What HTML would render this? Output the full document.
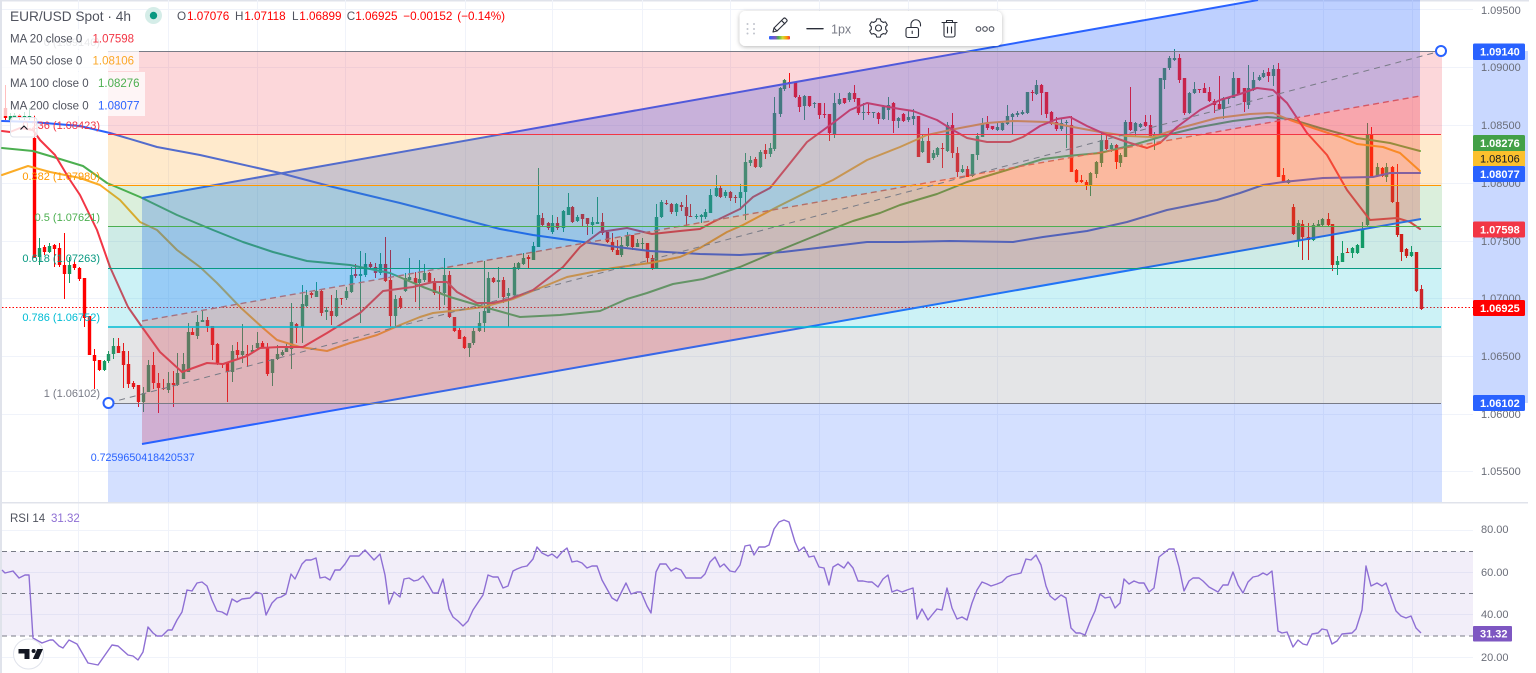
<!DOCTYPE html>
<html><head><meta charset="utf-8"><title>EUR/USD Spot</title>
<style>
html,body{margin:0;padding:0;background:#fff;width:1536px;height:673px;overflow:hidden}
svg{display:block;font-family:"Liberation Sans",sans-serif;filter:blur(.3px)}
text{white-space:pre}
</style></head><body>
<svg width="1536" height="673" viewBox="0 0 1536 673" xmlns="http://www.w3.org/2000/svg">
<defs>
<linearGradient id="rb" x1="0" x2="1" y1="0" y2="0"><stop offset="0" stop-color="#2962ff"/><stop offset=".3" stop-color="#7e57c2"/><stop offset=".45" stop-color="#4caf50"/><stop offset=".65" stop-color="#cddc39"/><stop offset=".85" stop-color="#ff9800"/><stop offset="1" stop-color="#f23645"/></linearGradient>
<filter id="sh" x="-5%" y="-20%" width="110%" height="150%"><feDropShadow dx="0" dy="1" stdDeviation="2.2" flood-color="#000" flood-opacity=".28"/></filter>
</defs>
<rect width="1536" height="673" fill="#fff"/>
<!-- frame -->
<rect x="0" y="0" width="2" height="673" fill="#e0e3eb"/>
<rect x="0" y="0" width="1529" height="1.5" fill="#e0e3eb"/>
<!-- grid -->
<g stroke="#f0f3fa" stroke-width="1">
<path d="M78.5 0V673M168.5 0V673M257.5 0V673M345.5 0V673M465.5 0V673M552.5 0V673M642.5 0V673M730.5 0V673M819.5 0V673M908.5 0V673M997.5 0V673M1145.5 0V673M1234.5 0V673M1323.5 0V673M1412.5 0V673"/>
<path d="M2 9.5H1473M2 67.5H1473M2 125.5H1473M2 183.5H1473M2 241.5H1473M2 298.5H1473M2 356.5H1473M2 414.5H1473M2 471.5H1473"/>
<path d="M2 530.5H1473M2 572.5H1473M2 614.5H1473M2 657.5H1473"/>
</g>
<!-- candles -->
<g transform="translate(.5 0)" fill="none">
<path stroke="#ff0000" stroke-width="1" d="M5 85V120M19 114V120M34 115V258M44 245V255M54 244V267M59 243V267M64 233V299M74 260V270M79 267V281M84 278V327M89 316V355M94 349V389M99 360V371M118 338V353M123 343V388M128 351V388M133 381V389M138 385V407M153 352V389M158 373V413M163 379V390M173 371V407M192 328V335M207 317V332M212 326V360M217 343V365M222 363V368M227 363V402M237 342V360M247 345V367M262 341V347M267 343V376M296 323V343M311 292V298M321 290V316M331 295V325M341 298V305M355 264V278M370 262V268M375 263V278M385 237V282M390 250V327M400 296V309M415 272V302M429 272V283M434 278V295M439 286V310M449 271V318M454 317V332M459 328V339M464 336V349M493 277V283M503 277V303M528 255V269M542 213V227M548 222V230M557 217V230M572 206V223M582 214V227M587 218V235M602 213V235M607 232V243M612 233V252M617 240V255M632 235V250M647 243V263M652 255V270M666 200V205M671 203V214M681 202V211M686 195V227M690 204V217M720 185V198M730 191V201M735 195V203M755 157V168M765 144V159M789 73V88M795 82V98M799 95V112M809 96V107M819 103V119M824 103V118M829 114V141M844 98V104M854 85V102M858 98V115M868 103V115M878 112V124M893 102V133M903 113V122M918 116V157M928 128V163M942 143V168M952 113V158M957 147V177M967 166V177M987 116V130M992 126V130M1032 90V101M1041 84V115M1046 92V118M1051 111V125M1056 117V131M1071 116V172M1076 169V183M1081 175V183M1086 180V190M1106 133V150M1116 144V169M1130 87V131M1145 115V127M1150 115V138M1179 54V83M1184 78V115M1199 89V93M1204 83V93M1209 87V102M1214 99V113M1219 76V110M1238 78V95M1244 88V112M1268 68V82M1278 63V177M1283 168V183M1293 204V235M1302 220V260M1308 223V260M1328 213V227M1332 224V271M1347 248V253M1371 127V178M1382 167V177M1392 166V203M1397 164V237M1401 234V261M1406 248V258M1416 252V292M1421 285V310"/>
<path stroke="#ff0000" stroke-width="3.4" d="M5 108V118M19 115V118M34 138V258M44 247V252M54 245V249M59 248V265M64 265V274M74 264V268M79 268V279M84 278V318M89 316V355M94 355V361M99 360V370M118 346V353M123 351V365M128 364V384M133 383V387M138 385V402M153 365V383M158 383V388M163 388V389M173 383V385M192 332V335M207 320V326M212 326V345M217 344V363M222 363V365M227 363V372M237 350V355M247 354V355M262 343V347M267 347V374M296 324V328M311 293V295M321 291V313M331 311V316M341 298V299M355 274V276M370 264V267M375 267V273M385 264V281M390 280V316M400 298V307M415 278V283M429 273V282M434 282V293M439 292V293M449 275V317M454 317V331M459 330V339M464 337V348M493 278V282M503 280V297M528 257V259M542 218V225M548 223V228M557 223V228M572 207V222M582 214V219M587 218V224M602 222V233M607 232V242M612 242V250M617 250V255M632 235V247M647 243V258M652 258V268M666 203V204M671 204V212M681 205V207M686 207V216M690 216V217M720 188V197M730 192V198M735 197V198M755 159V167M765 150V154M789 82V83M795 82V97M799 97V107M809 96V106M819 103V115M824 114V115M829 114V133M844 98V103M854 93V99M858 98V113M868 112V113M878 113V119M893 103V121M903 114V121M918 116V157M928 141V163M942 148V149M952 125V153M957 153V172M967 169V177M987 124V128M992 126V129M1032 92V93M1041 85V93M1046 92V114M1051 112V124M1056 122V129M1071 125V172M1076 170V182M1081 180V182M1086 182V185M1106 140V149M1116 145V162M1130 122V130M1145 122V126M1150 125V137M1179 58V80M1184 78V113M1199 89V90M1204 88V93M1209 92V101M1214 101V105M1219 104V109M1238 78V94M1244 88V102M1268 72V76M1278 69V177M1283 175V182M1293 207V234M1302 224V237M1308 237V240M1328 219V225M1332 224V265M1347 252V253M1371 135V177M1382 168V176M1392 167V202M1397 202V235M1401 234V252M1406 249V256M1416 252V291M1421 289V309"/>
<path stroke="#159a60" stroke-width="1" d="M10 113V130M14 113V118M24 112V120M29 108V120M39 238V265M49 243V253M69 257V283M104 360V371M108 351V363M113 338V359M143 387V412M148 360V392M168 372V393M177 353V386M183 353V379M188 323V372M197 315V339M202 310V322M232 345V382M242 324V363M252 345V353M257 332V350M272 359V386M277 345V360M282 350V356M286 343V352M291 303V369M302 285V343M306 290V307M316 282V297M326 307V320M336 290V317M346 287V300M351 267V293M360 251V323M365 253V277M380 253V275M395 295V327M405 273V292M409 258V282M419 260V310M424 264V282M444 258V305M469 343V357M473 328V345M479 312V332M484 261V332M488 272V313M498 267V298M508 288V327M514 263V297M518 262V270M523 253V265M533 242V260M538 168V247M552 215V234M563 210V232M568 193V215M577 215V222M592 217V234M597 197V224M621 237V257M627 232V247M637 239V247M642 238V250M656 204V268M661 200V218M676 203V216M696 214V219M701 214V223M705 209V219M710 189V213M716 175V197M725 190V198M740 184V210M745 153V220M750 156V166M760 150V168M770 143V157M774 97V151M780 87V117M784 79V91M804 95V120M814 102V108M834 93V138M839 93V105M849 92V102M863 103V120M873 112V118M883 105V120M888 97V120M898 117V128M908 110V122M913 109V125M922 135V153M933 150V160M937 147V157M947 122V152M962 165V173M972 154V177M977 133V160M982 118V137M997 123V131M1002 122V131M1007 105V125M1012 113V135M1017 111V117M1022 110V115M1027 92V114M1036 80V95M1061 118V131M1066 120V148M1090 172V196M1096 161V178M1101 132V167M1111 143V152M1120 153V167M1125 120V157M1135 122V137M1140 123V128M1154 132V150M1160 78V135M1164 68V89M1169 56V70M1174 49V61M1189 92V114M1194 82V94M1223 97V119M1228 97V104M1233 72V98M1248 65V109M1253 72V91M1259 75V81M1263 70V78M1273 65V86M1288 179V184M1298 220V247M1313 223V241M1318 220V227M1322 218V226M1337 256V275M1342 241V262M1352 247V258M1357 244V254M1362 222V248M1367 123V227M1377 163V177M1386 163V182M1411 246V257"/>
<path stroke="#159a60" stroke-width="3.4" d="M10 116V120M14 115V118M24 116V118M29 116V118M39 248V257M49 246V252M69 265V274M104 361V370M108 354V361M113 346V354M143 393V402M148 365V392M168 383V390M177 373V385M183 364V379M188 332V372M197 322V336M202 320V322M232 351V372M242 351V355M252 350V352M257 343V348M272 359V373M277 354V359M282 352V355M286 348V352M291 322V349M302 304V327M306 295V306M316 291V297M326 310V312M336 298V316M346 291V298M351 275V292M360 274V276M365 264V275M380 264V273M395 299V316M405 278V291M409 277V280M419 279V283M424 273V280M444 275V293M469 343V348M473 331V343M479 323V331M484 311V323M488 278V313M498 280V282M508 293V296M514 267V295M518 263V268M523 258V264M533 246V260M538 215V247M552 223V232M563 211V228M568 207V215M577 217V221M592 222V225M597 222V224M621 245V255M627 235V246M637 243V247M642 243V244M656 217V268M661 202V217M676 204V212M696 216V217M701 215V217M705 212V217M710 195V213M716 188V196M725 192V196M740 192V198M745 162V192M750 160V163M760 152V167M770 148V154M774 113V149M780 88V114M784 80V89M804 96V106M814 103V104M834 103V134M839 99V104M849 93V100M863 112V113M873 112V113M883 107V119M888 105V110M898 118V121M908 117V120M913 116V119M922 141V152M933 153V158M937 148V155M947 125V151M962 169V172M972 154V176M977 136V155M982 123V137M997 127V130M1002 123V130M1007 116V124M1012 114V117M1017 113V115M1022 112V114M1027 92V113M1036 85V94M1061 123V129M1066 122V123M1090 173V185M1096 162V174M1101 140V163M1111 145V149M1120 155V163M1125 122V157M1135 123V131M1140 124V127M1154 134V138M1160 78V135M1164 68V80M1169 58V68M1174 58V60M1189 93V113M1194 89V93M1223 98V109M1228 97V99M1233 78V98M1248 88V105M1253 80V90M1259 77V80M1263 73V77M1273 69V76M1288 180V183M1298 223V241M1313 225V240M1318 224V226M1322 219V225M1337 261V265M1342 253V262M1352 248V253M1357 245V253M1362 230V248M1367 135V225M1377 167V176M1386 167V177M1411 252V256"/>
</g>
<!-- moving averages -->
<g fill="none" stroke-width="2" stroke-linejoin="round" stroke-linecap="round">
<polyline stroke="#2962ff" points="2,121 33,122 80,126 110,133 157,147 200,155 280,173 333,187 400,203 500,229 533,235 583,242 617,247 650,251 700,254 740,255 783,252 817,248 867,242 900,242 950,241 1013,242 1043,237 1087,231 1127,222 1167,210 1217,200 1240,193 1263,185 1283,182 1323,178 1373,177 1390,173 1420,173"/>
<polyline stroke="#4caf50" points="2,148 33,151 60,159 83,166 107,183 140,197 177,215 213,230 243,242 273,252 307,261 350,265 390,273 423,287 450,297 477,305 520,317 560,315 600,311 627,299 647,293 673,284 703,279 740,267 773,253 800,242 827,231 853,221 880,213 900,205 937,194 967,182 1007,170 1043,159 1067,156 1100,153 1133,145 1167,135 1200,127 1233,121 1267,117 1290,119 1320,128 1357,138 1390,143 1420,151"/>
<polyline stroke="#fbac27" points="2,175 28,166 50,172 80,178 100,185 120,200 140,222 157,230 177,250 200,267 217,283 240,307 263,328 277,340 300,347 327,351 350,343 377,335 400,325 420,317 433,313 460,310 483,307 513,299 567,277 613,268 650,263 680,257 700,248 727,232 743,225 777,207 807,192 833,180 867,160 900,147 927,135 960,128 987,123 1013,121 1047,122 1073,127 1100,132 1127,136 1153,137 1180,128 1217,118 1250,114 1273,113 1290,120 1313,128 1340,137 1357,144 1383,147 1400,153 1420,171"/>
<polyline stroke="#f23645" points="2,131 10,132 20,128 33,130 40,140 55,155 70,180 80,195 97,230 110,267 128,307 142,327 160,352 182,372 207,363 223,364 247,356 260,348 280,347 303,347 327,333 340,325 360,313 383,291 413,287 433,282 447,282 457,292 477,303 493,303 510,299 533,290 563,267 580,247 600,232 627,228 652,234 680,231 700,229 713,222 740,209 753,197 770,188 787,167 807,142 833,123 850,110 867,103 883,106 900,109 913,111 937,120 953,130 967,138 987,142 1010,142 1023,137 1040,126 1057,119 1070,117 1087,126 1107,135 1127,142 1147,148 1160,143 1177,127 1200,110 1220,100 1240,94 1257,88 1273,90 1287,103 1307,133 1327,155 1347,190 1370,220 1397,218 1410,222 1420,229"/>
</g>
<!-- last price line -->
<path d="M2 307.5H1473" stroke="#ff0000" stroke-width="1" stroke-dasharray="1.5 2" fill="none"/>
<!-- channel -->
<path d="M142 198L1258 0H1420V96L142 321Z" fill="#2962ff" fill-opacity=".3"/>
<path d="M142 321L1420 96V219L142 444Z" fill="#f23645" fill-opacity=".3"/>
<path d="M142 198L1258 0" stroke="#2962ff" stroke-width="2" fill="none"/>
<path d="M142 444L1421 219" stroke="#2962ff" stroke-width="2" fill="none"/>
<path d="M142 321L1420 96" stroke="#d0606c" stroke-width="1.4" stroke-dasharray="6 4" fill="none"/>
<!-- fib -->
<rect x="108" y="51.5" width="1334" height="82.5" fill="#f23645" fill-opacity=".2"/>
<rect x="108" y="134" width="1334" height="51" fill="#ff9800" fill-opacity=".2"/>
<rect x="108" y="185" width="1334" height="41" fill="#4caf50" fill-opacity=".2"/>
<rect x="108" y="226" width="1334" height="42" fill="#089981" fill-opacity=".2"/>
<rect x="108" y="268" width="1334" height="59" fill="#00bcd4" fill-opacity=".2"/>
<rect x="108" y="327" width="1334" height="76" fill="#787b86" fill-opacity=".2"/>
<rect x="108" y="403" width="1334" height="99" fill="#2962ff" fill-opacity=".2"/>
<g stroke-width="1" fill="none">
<path d="M108 51.5H1441" stroke="#787b86"/>
<path d="M108 134.5H1441" stroke="#f23645"/>
<path d="M108 185.5H1441" stroke="#ff9800"/>
<path d="M108 226.5H1441" stroke="#4caf50"/>
<path d="M108 268.5H1441" stroke="#089981"/>
<path d="M108 327H1441" stroke="#00bcd4" stroke-width="1.4"/>
<path d="M108 403.5H1441" stroke="#787b86"/>
<path d="M108.5 403L1441 51" stroke="#787b86" stroke-dasharray="6 5"/>
</g>
<!-- fib labels -->
<g font-size="11" text-anchor="end">
<text x="100" y="46" fill="#787b86" opacity=".7">0 (1.09140)</text>
<text x="100" y="129" fill="#f23645">0.236 (1.08423)</text>
<text x="100" y="180" fill="#ff9800">0.382 (1.07980)</text>
<text x="100" y="221" fill="#4caf50">0.5 (1.07621)</text>
<text x="100" y="262" fill="#089981">0.618 (1.07263)</text>
<text x="100" y="321" fill="#00bcd4">0.786 (1.06752)</text>
<text x="100" y="397" fill="#787b86">1 (1.06102)</text>
</g>
<text x="90.7" y="461" font-size="10.7" fill="#2962ff">0.7259650418420537</text>
<!-- handles -->
<circle cx="108.5" cy="403" r="5" fill="#fff" stroke="#2962ff" stroke-width="2"/>
<circle cx="1441" cy="51" r="5" fill="#fff" stroke="#2962ff" stroke-width="2"/>
<!-- legend backgrounds -->
<g fill="#fff">
<rect x="2" y="29" width="133" height="20" fill-opacity=".75"/>
<rect x="2" y="50" width="137" height="21" fill-opacity=".75"/>
<rect x="2" y="72" width="143" height="44" fill-opacity=".75"/>
</g>
<!-- legend -->
<text x="10" y="21" font-size="13.7" fill="#50535e">EUR/USD Spot · 4h</text>
<circle cx="153.5" cy="15.5" r="8.5" fill="#d5ede8"/>
<circle cx="153.5" cy="15.5" r="3.7" fill="#089981"/>
<g font-size="11.7" fill="#ff0000">
<text x="177" y="20" fill="#50535e">O</text><text x="187" y="20">1.07076</text>
<text x="235" y="20" fill="#50535e">H</text><text x="244.3" y="20">1.07118</text>
<text x="292" y="20" fill="#50535e">L</text><text x="299.3" y="20">1.06899</text>
<text x="346.7" y="20" fill="#50535e">C</text><text x="355.3" y="20">1.06925</text>
<text x="403.3" y="20">−0.00152</text><text x="457.3" y="20">(−0.14%)</text>
</g>
<g font-size="11.5" fill="#50535e">
<text x="10" y="42.5">MA 20 close 0</text><text x="92.5" y="42.5" fill="#f23645">1.07598</text>
<text x="10" y="64.5">MA 50 close 0</text><text x="92.5" y="64.5" fill="#fba726">1.08106</text>
<text x="10" y="87">MA 100 close 0</text><text x="98" y="87" fill="#4caf50">1.08276</text>
<text x="10" y="109.5">MA 200 close 0</text><text x="98" y="109.5" fill="#2962ff">1.08077</text>
</g>
<!-- collapse button -->
<rect x="10.5" y="117.5" width="26.5" height="19.5" rx="3" fill="#fff" fill-opacity=".82" stroke="#e0e3eb"/>
<path d="M20.5 129.5L24 126L27.5 129.5" fill="none" stroke="#131722" stroke-width="1.1"/>
<!-- price scale -->
<rect x="1473" y="51" width="55" height="352" fill="#2962ff" fill-opacity=".25"/>
<g font-size="11" fill="#6a6d78">
<text x="1481" y="14">1.09500</text>
<text x="1481" y="71">1.09000</text>
<text x="1481" y="129">1.08500</text>
<text x="1481" y="187">1.08000</text>
<text x="1481" y="245">1.07500</text>
<text x="1481" y="302">1.07000</text>
<text x="1481" y="360">1.06500</text>
<text x="1481" y="418">1.06000</text>
<text x="1481" y="475">1.05500</text>
<text x="1481" y="533">80.00</text>
<text x="1481" y="576">60.00</text>
<text x="1481" y="618">40.00</text>
<text x="1481" y="661">20.00</text>
</g>
<g>
<rect x="1473" y="43.5" width="52" height="16.5" rx="1.5" fill="#2962ff"/>
<rect x="1473" y="135" width="52" height="16.5" rx="1.5" fill="#43a047"/>
<rect x="1473" y="151" width="52" height="15" fill="#fbc02d"/>
<rect x="1473" y="166" width="52" height="16" rx="1.5" fill="#2962ff"/>
<rect x="1473" y="221.5" width="52" height="16" rx="1.5" fill="#f23645"/>
<rect x="1473" y="300" width="52" height="16" rx="1.5" fill="#ff0000"/>
<rect x="1473" y="395" width="52" height="16" rx="1.5" fill="#2962ff"/>
</g>
<g font-size="11" font-weight="700" fill="#fff">
<text x="1480" y="55.5">1.09140</text>
<text x="1480" y="147">1.08276</text>
<text x="1480" y="162.5" fill="#131722" font-weight="400">1.08106</text>
<text x="1480" y="178">1.08077</text>
<text x="1480" y="233.5">1.07598</text>
<text x="1480" y="312">1.06925</text>
<text x="1480" y="407">1.06102</text>
</g>
<!-- pane divider -->
<rect x="2" y="502" width="1526" height="1.5" fill="#e0e3eb"/>
<!-- RSI -->
<rect x="2" y="551.5" width="1471" height="84.5" fill="#7e57c2" fill-opacity=".1"/>
<g stroke="#787b86" stroke-width="1" stroke-dasharray="5 4" fill="none">
<path d="M2 551.5H1473M2 593.5H1473M2 636H1473"/>
</g>
<polyline fill="none" stroke="#8e6fd4" stroke-width="1.4" stroke-linejoin="round" points="2,570 5,573 13,571 19,578 25,575 29,575 33,638 42,643 50,640 53,640 59,646 63,648 69,640 77,644 88,663 98,665 112,645 118,646 128,655 133,656 138,660 143,652 148,627 153,633 157,636 162,636 168,630 172,630 177,620 182,612 187,590 192,591 197,583 202,582 207,586 212,600 217,611 222,612 227,615 232,599 237,602 242,599 250,598 256,592 262,594 266,615 272,603 277,598 281,597 286,594 291,574 295,579 302,564 306,560 311,560 316,558 320,578 325,577 330,580 335,570 340,570 345,564 350,556 359,556 365,550 374,560 380,554 385,575 389,604 394,592 400,597 404,579 409,578 414,581 418,580 423,576 428,584 433,593 438,593 443,579 449,609 453,617 458,621 463,626 468,621 473,610 483,595 488,575 493,577 498,577 503,588 508,586 513,571 517,569 522,567 527,566 533,559 537,547 542,553 548,556 552,554 557,558 562,552 567,548 572,562 577,561 582,563 587,568 592,566 597,566 602,580 612,598 617,601 626,583 631,594 637,592 641,592 647,606 651,613 656,572 660,564 666,564 671,571 676,568 681,570 686,578 701,578 705,574 710,562 715,557 720,567 724,564 730,571 735,572 740,565 745,546 750,545 754,555 759,547 765,547 769,545 774,529 779,522 784,520 789,522 795,542 799,551 804,547 809,557 814,556 819,567 824,568 829,585 833,567 838,564 844,568 848,562 853,568 858,581 863,581 868,582 872,582 878,587 883,579 888,575 892,592 897,590 902,592 907,590 913,588 917,619 922,609 928,620 932,615 937,609 942,610 947,588 952,608 957,619 962,617 967,620 972,603 977,590 982,582 987,584 991,586 997,584 1002,582 1007,577 1012,575 1017,574 1021,573 1026,559 1031,560 1036,555 1041,565 1046,586 1050,596 1055,600 1061,595 1066,598 1071,628 1076,633 1080,633 1085,635 1090,622 1095,611 1100,594 1105,598 1110,597 1115,608 1120,603 1124,579 1129,584 1134,581 1139,583 1144,583 1149,592 1154,588 1159,557 1164,553 1169,549 1174,549 1179,567 1184,591 1189,581 1193,578 1199,578 1203,581 1209,587 1218,592 1223,585 1228,585 1233,572 1238,585 1243,593 1248,582 1253,577 1258,576 1263,573 1267,575 1272,571 1278,631 1282,633 1287,632 1293,647 1298,640 1303,644 1307,645 1312,634 1318,633 1322,629 1327,630 1332,644 1337,641 1342,634 1352,633 1356,629 1362,610 1366,566 1371,586 1377,583 1382,586 1386,583 1392,600 1396,611 1401,616 1406,618 1411,616 1416,628 1421,633"/>
<text x="10" y="522" font-size="11.5" fill="#50535e">RSI 14</text>
<text x="51" y="522" font-size="11.5" fill="#8e6fd4">31.32</text>
<rect x="1473" y="626" width="39" height="15.5" rx="1" fill="#7e57c2"/>
<text x="1480" y="637.5" font-size="11" font-weight="700" fill="#fff">31.32</text>
<!-- TV logo -->
<circle cx="28.5" cy="654" r="15" fill="#fff" stroke="#e0e3eb" stroke-width="1"/>
<path d="M18.5 649H29.5V659H24.5V653.5H18.5Z" fill="#131722"/>
<circle cx="33.6" cy="651" r="2" fill="#131722"/>
<path d="M43 649L38.5 659H32.8L37.3 649Z" fill="#131722"/>
<!-- floating toolbar -->
<rect x="739.5" y="11" width="262.5" height="35" rx="6" fill="#fff" filter="url(#sh)"/>
<g fill="#c1c4cd">
<circle cx="747.5" cy="24" r="1"/><circle cx="754" cy="24" r="1"/>
<circle cx="747.5" cy="29" r="1"/><circle cx="754" cy="29" r="1"/>
<circle cx="747.5" cy="33.5" r="1"/><circle cx="754" cy="33.5" r="1"/>
</g>
<g fill="none" stroke="#2a2e39" stroke-width="1.1" stroke-linejoin="round" stroke-linecap="round">
<path d="M773 32L774 28L783.5 18.5A1.5 1.5 0 0 1 785.6 18.5L786.6 19.5A1.5 1.5 0 0 1 786.6 21.6L777 31Z"/>
<path d="M781.5 20.5L784.8 23.8M774 28L777 31"/>
<path d="M807 28.7H823" stroke-width="1.4"/>
<g transform="translate(878.5 28)">
<path d="M-2.5 -6.86L-1.77 -9.13L1.77 -9.13L2.5 -6.86L4.69 -5.59L7.02 -6.1L8.79 -3.03L7.19 -1.27L7.19 1.27L8.79 3.03L7.02 6.1L4.69 5.59L2.5 6.86L1.77 9.13L-1.77 9.13L-2.5 6.86L-4.69 5.59L-7.02 6.1L-8.79 3.03L-7.19 1.27L-7.19 -1.27L-8.79 -3.03L-7.02 -6.1L-4.69 -5.59Z"/>
<circle r="3"/>
</g>
<rect x="906" y="27.5" width="12.5" height="10" rx="2"/>
<path d="M911 27.5V24.5A4.75 4.75 0 0 1 920.5 24.5V26"/>
<path d="M912.2 31.2V33.5"/>
<path d="M942 22.5H957"/>
<path d="M944 22.5V35A2 2 0 0 0 946 37H953A2 2 0 0 0 955 35V22.5"/>
<path d="M946.5 22V20.5H952.5V22"/>
<path d="M947.5 27V33M951.5 27V33"/>
<g stroke="#50535e"><circle cx="978.5" cy="29" r="2.3"/><circle cx="985" cy="29" r="2.3"/><circle cx="991.5" cy="29" r="2.3"/></g>
</g>
<rect x="769" y="36" width="21" height="3.5" rx="1" fill="url(#rb)"/>
<text x="831" y="33.5" font-size="12.5" fill="#787b86">1px</text>
</svg>
</body></html>
